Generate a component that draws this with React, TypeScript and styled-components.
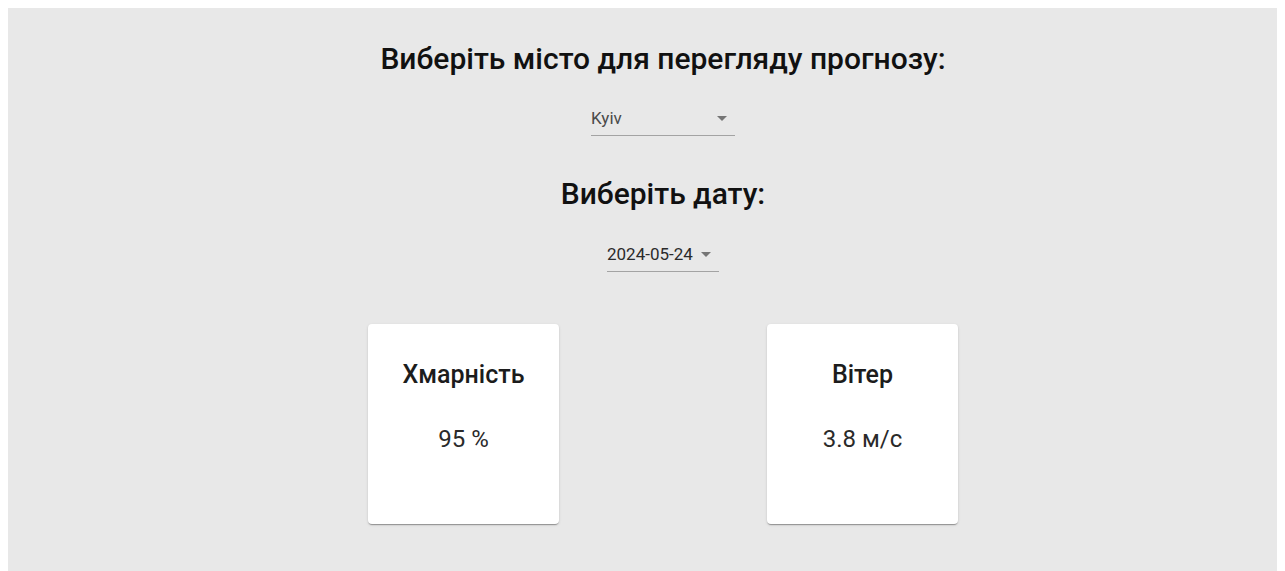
import styled, { createGlobalStyle } from "styled-components";

const GlobalStyle = createGlobalStyle`
  body {
    margin: 8px;
    font-family: Roboto, "Noto Sans", Arial, sans-serif;
  }
`;

const Page = styled.main`
  background-color: #e8e8e8;
  width: 1310px;
  min-height: 600px;
  display: flex;
  flex-direction: column;
  align-items: center;
  padding-top: 33px;
`;

const Heading = styled.h2<{ $gap?: number }>`
  margin: 0 0 ${(p) => p.$gap ?? 24}px;
  font-size: 30px;
  font-weight: 500;
  color: #111;
  line-height: 36px;
`;

const SelectBox = styled.div<{ $width: number; $after: number }>`
  width: ${(p) => p.$width}px;
  display: flex;
  align-items: center;
  justify-content: space-between;
  border-bottom: 1px solid #a3a3a3;
  padding: 4px 0 7px;
  margin-bottom: ${(p) => p.$after}px;
  cursor: pointer;
`;

const SelectValue = styled.span<{ $muted?: boolean }>`
  font-size: 17px;
  color: ${(p) => (p.$muted ? "#4a4a4a" : "#2b2b2b")};
`;

const Arrow = styled.span`
  width: 0;
  height: 0;
  border-left: 5px solid transparent;
  border-right: 5px solid transparent;
  border-top: 5px solid #757575;
  margin-right: 8px;
`;

const CardRow = styled.div`
  display: flex;
  gap: 208px;
  margin-top: 10px;
`;

const Card = styled.section`
  width: 191px;
  height: 200px;
  background: #fff;
  border-radius: 4px;
  box-shadow: 0 2px 1px -1px rgba(0, 0, 0, 0.2), 0 1px 1px 0 rgba(0, 0, 0, 0.14),
    0 1px 3px 0 rgba(0, 0, 0, 0.12);
  display: flex;
  flex-direction: column;
  align-items: center;
  padding-top: 36px;
  box-sizing: border-box;
`;

const CardTitle = styled.h3`
  margin: 0 0 34px;
  font-size: 25px;
  font-weight: 500;
  color: #1c1c1c;
  line-height: 30px;
`;

const CardValue = styled.p`
  margin: 0;
  font-size: 24px;
  color: #2a2a2a;
  line-height: 30px;
`;

const stats = [
  { title: "Хмарність", value: "95 %" },
  { title: "Вітер", value: "3.8 м/с" },
];

export default function App() {
  return (
    <>
      <GlobalStyle />
      <Page>
        <Heading $gap={27}>Виберіть місто для перегляду прогнозу:</Heading>
        <SelectBox $width={144} $after={40}>
          <SelectValue $muted>Kyiv</SelectValue>
          <Arrow />
        </SelectBox>
        <Heading $gap={28}>Виберіть дату:</Heading>
        <SelectBox $width={112} $after={42}>
          <SelectValue>2024-05-24</SelectValue>
          <Arrow />
        </SelectBox>
        <CardRow>
          {stats.map((s) => (
            <Card key={s.title}>
              <CardTitle>{s.title}</CardTitle>
              <CardValue>{s.value}</CardValue>
            </Card>
          ))}
        </CardRow>
      </Page>
    </>
  );
}
